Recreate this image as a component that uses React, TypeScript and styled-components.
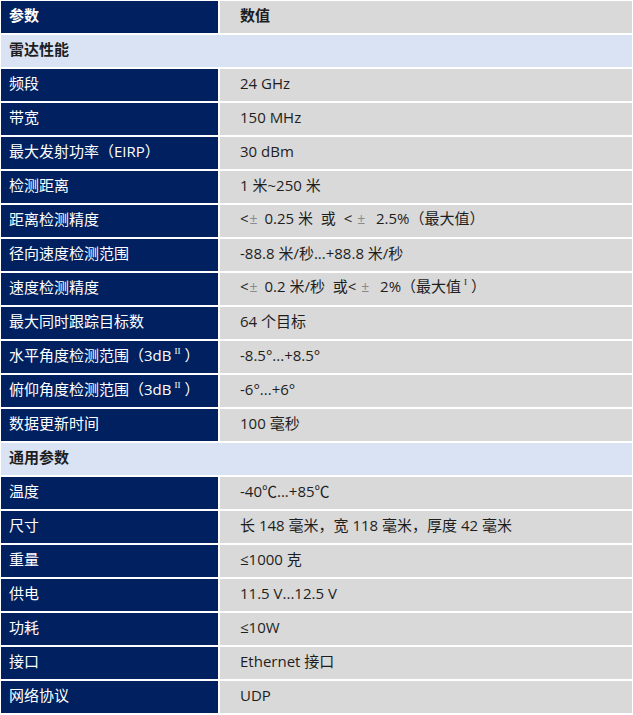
import React from "react";
import styled, { createGlobalStyle } from "styled-components";

const Global = createGlobalStyle`
  html, body { margin: 0; padding: 0; background: #ffffff; }
  body { font-family: "Open Sans", "Noto Sans CJK SC", sans-serif; }
`;

const Table = styled.div`
  display: grid;
  grid-template-columns: 217px 1fr;
  column-gap: 2px;
  row-gap: 2px;
  padding: 1px 1px 0 1px;
  width: 631px;
  box-sizing: content-box;
  background: #ffffff;
`;

const Cell = styled.div<{ $kind: "key" | "val" }>`
  height: 32px;
  display: flex;
  align-items: center;
  box-sizing: border-box;
  font-size: 15px;
  line-height: 20px;
  padding-left: ${(p) => (p.$kind === "key" ? "8px" : "20px")};
  padding-bottom: 5px;
  background: ${(p) => (p.$kind === "key" ? "#002060" : "#d9d9d9")};
  color: ${(p) => (p.$kind === "key" ? "#ffffff" : "#1e1e1e")};
  font-family: "Open Sans", "Noto Sans CJK SC", sans-serif;
`;

const Text = styled.span`
  white-space: pre;
`;

const HeadCell = styled(Cell)`
  font-weight: 700;
`;

const Section = styled.div`
  grid-column: 1 / span 2;
  height: 32px;
  display: flex;
  align-items: center;
  box-sizing: border-box;
  padding-left: 8px;
  padding-bottom: 5px;
  background: #dae3f3;
  color: #1e1e1e;
  font-size: 15px;
  line-height: 20px;
  font-weight: 700;
  font-family: "Open Sans", "Noto Sans CJK SC", sans-serif;
`;

const Pm = styled.span`
  color: #8a8a8a;
  font-size: 14px;
  margin: 0 3px 0 1px;
`;

const Sup = styled.span`
  font-family: "Liberation Serif", serif;
  font-size: 9px;
  line-height: 0;
  vertical-align: 7px;
  margin: 0 4px 0 3px;
`;

type Row =
  | { type: "section"; label: string }
  | { type: "row"; key: React.ReactNode; val: React.ReactNode };

const rows: Row[] = [
  { type: "section", label: "雷达性能" },
  { type: "row", key: "频段", val: "24 GHz" },
  { type: "row", key: "带宽", val: "150 MHz" },
  { type: "row", key: "最大发射功率（EIRP）", val: "30 dBm" },
  { type: "row", key: "检测距离", val: "1 米~250 米" },
  {
    type: "row",
    key: "距离检测精度",
    val: (
      <>
        {"<"}
        <Pm>±</Pm>
        {" 0.25 米  或  < "}
        <Pm>±</Pm>
        {"  2.5%（最大值）"}
      </>
    ),
  },
  { type: "row", key: "径向速度检测范围", val: "-88.8 米/秒...+88.8 米/秒" },
  {
    type: "row",
    key: "速度检测精度",
    val: (
      <>
        {"<"}
        <Pm>±</Pm>
        {" 0.2 米/秒  或< "}
        <Pm>±</Pm>
        {"  2%（最大值"}
        <Sup>I</Sup>
        {"）"}
      </>
    ),
  },
  { type: "row", key: "最大同时跟踪目标数", val: "64 个目标" },
  {
    type: "row",
    key: (
      <>
        {"水平角度检测范围（3dB"}
        <Sup>II</Sup>
        {"）"}
      </>
    ),
    val: "-8.5°...+8.5°",
  },
  {
    type: "row",
    key: (
      <>
        {"俯仰角度检测范围（3dB"}
        <Sup>II</Sup>
        {"）"}
      </>
    ),
    val: "-6°...+6°",
  },
  { type: "row", key: "数据更新时间", val: "100 毫秒" },
  { type: "section", label: "通用参数" },
  { type: "row", key: "温度", val: "-40℃...+85℃" },
  { type: "row", key: "尺寸", val: "长 148 毫米，宽 118 毫米，厚度 42 毫米" },
  { type: "row", key: "重量", val: "≤1000 克" },
  { type: "row", key: "供电", val: "11.5 V...12.5 V" },
  { type: "row", key: "功耗", val: "≤10W" },
  { type: "row", key: "接口", val: "Ethernet 接口" },
  { type: "row", key: "网络协议", val: "UDP" },
];

export default function App() {
  return (
    <>
      <Global />
      <Table>
        <HeadCell $kind="key">
          <Text>参数</Text>
        </HeadCell>
        <HeadCell $kind="val">
          <Text>数值</Text>
        </HeadCell>
        {rows.map((r, i) =>
          r.type === "section" ? (
            <Section key={i}>{r.label}</Section>
          ) : (
            <React.Fragment key={i}>
              <Cell $kind="key">
                <Text>{r.key}</Text>
              </Cell>
              <Cell $kind="val">
                <Text>{r.val}</Text>
              </Cell>
            </React.Fragment>
          )
        )}
      </Table>
    </>
  );
}
